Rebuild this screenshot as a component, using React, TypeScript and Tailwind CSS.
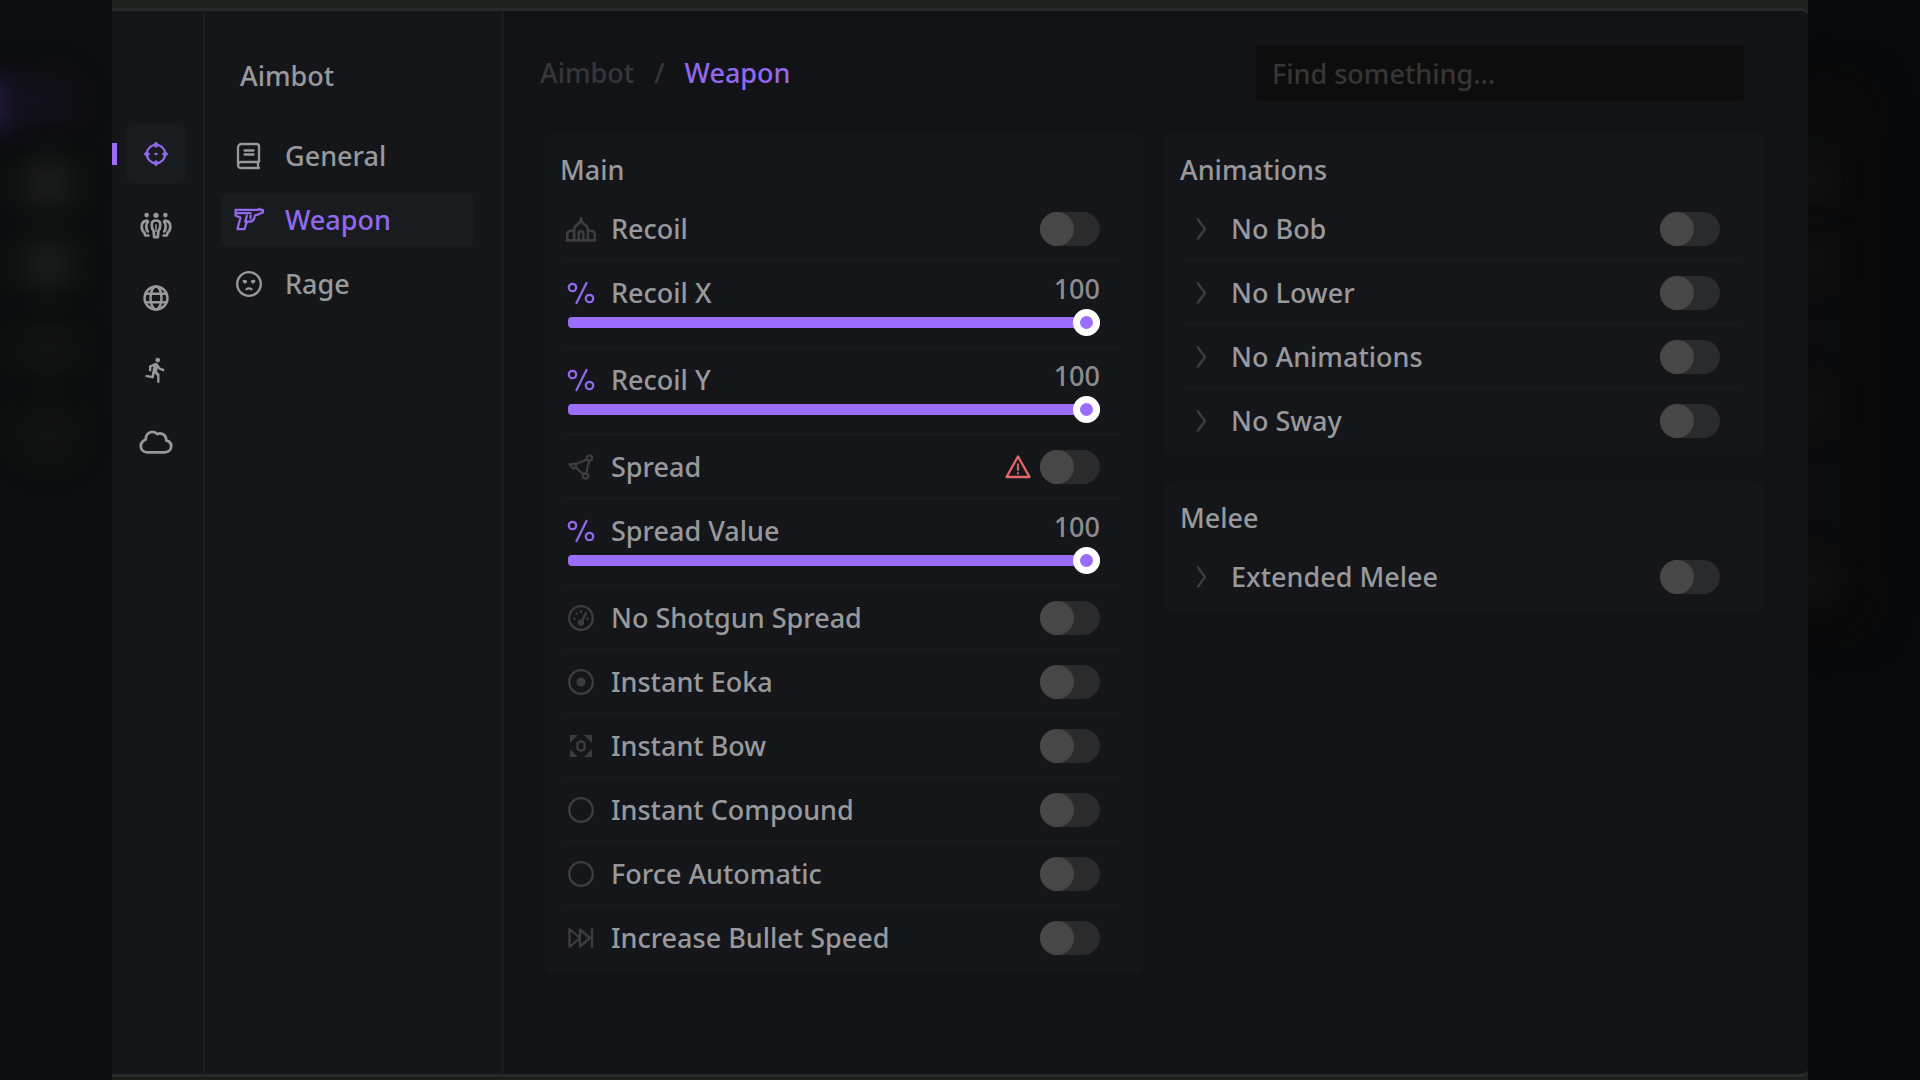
import { useState } from 'react'
import type { ReactNode } from 'react'
import { MdDirectionsRun } from 'react-icons/md'

type IconProps = { size?: number; width?: number; children: ReactNode }

function Icon({ size = 28, width = 2.3, children }: IconProps) {
  return (
    <svg
      width={size}
      height={size}
      viewBox="0 0 28 28"
      fill="none"
      stroke="currentColor"
      strokeWidth={width}
      strokeLinecap="round"
      strokeLinejoin="round"
      className="shrink-0"
      aria-hidden="true"
    >
      {children}
    </svg>
  )
}

const icons = {
  crosshair: (
    <Icon>
      <circle cx="14" cy="14" r="9.2" />
      <path
        d="M14 1.5l3 3.3-3 3.4-3-3.4zM14 26.5l3-3.3-3-3.4-3 3.4zM1.500 14l3.300-3 3.400 3-3.400 3zM26.500 14l-3.300-3-3.400 3 3.400 3z"
        fill="currentColor"
        stroke="none"
      />
      <path d="M13.500 14h1" />
    </Icon>
  ),
  team: (
    <Icon size={34} width={2.2}>
      <g fill="currentColor" stroke="none">
        <circle cx="14" cy="5.200" r="2.200" />
        <circle cx="6.300" cy="5" r="1.900" />
        <circle cx="21.700" cy="5" r="1.900" />
      </g>
      <path d="M14 9.500c2.600 0 3.500 1.400 3.500 3.400 0 2.200-.7 4.200-1.500 5.200l-.5 5h-3l-.5-5c-.8-1-1.500-3-1.500-5.200 0-2 .9-3.400 3.500-3.400z" />
      <path d="M14 13v5.500" strokeWidth="1.2" />
      <path d="M6.800 9.600c-3 .2-4.600 2-4.600 4.800 0 2.600 1 4.200 2.300 5.200l.6 2.200h2.700M7.400 10.500c-1.800 1.600-1.900 6-.2 8" />
      <path d="M21.200 9.600c3 .2 4.600 2 4.600 4.800 0 2.600-1 4.200-2.300 5.200l-.6 2.200h-2.700M20.600 10.500c1.800 1.600 1.900 6 .2 8" />
    </Icon>
  ),
  globe: (
    <Icon width={2.5}>
      <circle cx="14" cy="14" r="11.500" />
      <path d="M4 9.800h20M4 18.200h20" />
      <ellipse cx="14" cy="14" rx="5.500" ry="11.500" />
    </Icon>
  ),
  cloud: (
    <Icon size={34}>
      <path d="M7 22.500h14.200c3.200 0 5.300-2.200 5.300-4.900 0-2.500-1.700-4.300-4-4.700.2-3.300-2.100-6-5.200-6-.8 0-1.500.2-2.200.6-1.100-1.200-2.500-1.800-4-1.800-3.500 0-5.700 2.600-5.600 6.300-2.400 1-4 3-4 5.400 0 3 2.200 5.100 5.500 5.100z" />
    </Icon>
  ),
  book: (
    <Icon>
      <path d="M24 20V4.500A2.500 2.500 0 0 0 21.500 2h-15A3.500 3.500 0 0 0 3 5.500V23M24 20H6a3 3 0 0 0 0 6h18M23 20v6M9.500 8.500h9M9.500 12.500h9" />
    </Icon>
  ),
  pistol: (
    <Icon size={30} width={2.1}>
      <path d="M1.500 4.500h21l1-1 1 1H27v2.300c-2 .5-4.500 2.700-7.500 2.900-.3 3.800-2.300 6-5.500 5.800h-2L9.800 22.500H3.200L6 11.700 1.500 10zM1.500 7.500h14M12 10l-1.500 5.500M15.500 10v2.500" />
    </Icon>
  ),
  face: (
    <Icon>
      <circle cx="14" cy="14" r="11.800" />
      <path d="M8.800 11l2.200.4-1 1.200zM19.200 11l-2.200.4 1 1.200z" fill="currentColor" />
      <path d="M11.500 19.200c1.200-1.200 3.800-1.200 5 0" />
    </Icon>
  ),
  percent: (
    <Icon>
      <circle cx="5.500" cy="8.500" r="3.700" />
      <circle cx="22.500" cy="19.500" r="3.700" />
      <path d="M19.500 4L9.500 24" />
    </Icon>
  ),
  recoil: (
    <Icon size={32}>
      <path d="M1.500 24h25M2 23.500v-5c0-2 1-3 3-3h2M26 23.500v-5c0-2-1-3-3-3h-2M8 23.500V14c0-1.500 1.500-3 3.500-4.500C13 8.500 14 7 14 4.500c0 2.500 1 4 2.500 5C18.500 11 20 12.500 20 14v9.500M12 23.500V18c0-2.500 4-2.500 4 0v5.500" />
    </Icon>
  ),
  spread: (
    <Icon>
      <circle cx="22.500" cy="5" r="2.700" />
      <circle cx="18.500" cy="23" r="2.700" />
      <path d="M20 6.200L9 11.200M22 7.800L19.300 20.200M8.500 14.500l8 7M2.500 11.500l6-.8.8 3.800-3 1.200z" />
    </Icon>
  ),
  gauge: (
    <Icon>
      <circle cx="14" cy="14" r="11.800" />
      <circle cx="14" cy="18.500" r="2" fill="currentColor" />
      <path d="M15 17l4-8M7.500 15v-.5M9.500 9.500l.3.300M14 7.500v.5M20.500 14.500v.5" />
    </Icon>
  ),
  target: (
    <Icon>
      <circle cx="14" cy="14" r="11.800" />
      <circle cx="14" cy="14" r="4.500" fill="currentColor" stroke="none" />
    </Icon>
  ),
  focus: (
    <Icon>
      <path
        d="M3 3h8L3 11zM25 3v8l-8-8zM3 25v-8l8 8zM25 25h-8l8-8z"
        fill="currentColor"
        stroke="none"
      />
      <path d="M14 9l3.500 2v6L14 19l-3.500-2v-6z" />
    </Icon>
  ),
  circle: (
    <Icon>
      <circle cx="14" cy="14" r="11.800" />
    </Icon>
  ),
  forward: (
    <Icon>
      <path d="M2.500 5v18L13 14zM13 5.500v17L23 14zM25 5v18" />
    </Icon>
  ),
  chevron: (
    <Icon>
      <path d="M11 4.500l7 9.500-7 9.500" />
    </Icon>
  ),
  warning: (
    <Icon>
      <path d="M14 3.500L25.500 24h-23z" />
      <path d="M14 11.500v5.500M14 20.200v.3" stroke="#b06a66" />
    </Icon>
  ),
}

type IconName = keyof typeof icons

type Setting = {
  label: string
  icon: IconName
  slider?: boolean
  warning?: boolean
}

const mainSettings: Setting[] = [
  { label: 'Recoil', icon: 'recoil' },
  { label: 'Recoil X', icon: 'percent', slider: true },
  { label: 'Recoil Y', icon: 'percent', slider: true },
  { label: 'Spread', icon: 'spread', warning: true },
  { label: 'Spread Value', icon: 'percent', slider: true },
  { label: 'No Shotgun Spread', icon: 'gauge' },
  { label: 'Instant Eoka', icon: 'target' },
  { label: 'Instant Bow', icon: 'focus' },
  { label: 'Instant Compound', icon: 'circle' },
  { label: 'Force Automatic', icon: 'circle' },
  { label: 'Increase Bullet Speed', icon: 'forward' },
]

const animationSettings: Setting[] = [
  { label: 'No Bob', icon: 'chevron' },
  { label: 'No Lower', icon: 'chevron' },
  { label: 'No Animations', icon: 'chevron' },
  { label: 'No Sway', icon: 'chevron' },
]

const meleeSettings: Setting[] = [{ label: 'Extended Melee', icon: 'chevron' }]

function toId(label: string) {
  return label.toLowerCase().replace(/\s+/g, '-')
}

function ToggleRow({ label, icon, warning }: Setting) {
  return (
    <div className="flex h-16 items-center border-b border-[#1b1d20] pr-5 last:border-transparent">
      <span className="ml-px flex w-8 justify-center text-[#3c3d40]">{icons[icon]}</span>
      <label htmlFor={toId(label)} className="ml-3.5 grow">
        {label}
      </label>
      {warning && <span className="mr-2 text-[#e8666a]">{icons.warning}</span>}
      <input
        id={toId(label)}
        type="checkbox"
        role="switch"
        className="h-[34px] w-[60px] shrink-0 cursor-pointer appearance-none rounded-full bg-[#2a2b2d] before:block before:size-[34px] before:rounded-full before:bg-[#474747] before:content-[''] checked:bg-[#9a6dfb] checked:before:translate-x-[26px]"
      />
    </div>
  )
}

function SliderRow({ label, icon }: Setting) {
  const [value, setValue] = useState(100)

  return (
    <div className="flex h-[87px] flex-col border-b border-[#1b1d20] pr-5 pt-3 last:border-transparent">
      <div className="flex h-10 items-center">
        <span className="ml-px flex w-8 justify-center text-[#9168ee]">{icons[icon]}</span>
        <label htmlFor={toId(label)} className="ml-3.5 grow">
          {label}
        </label>
        <output className="pb-2 text-[#8b8c90]">{value}</output>
      </div>
      <input
        id={toId(label)}
        type="range"
        min={0}
        max={100}
        value={value}
        onChange={(e) => setValue(Number(e.target.value))}
        style={{
          backgroundImage: `linear-gradient(to right, #9a6dfb ${value}%, #2a2b2d ${value}%)`,
        }}
        className="ml-1 mt-1 h-[11px] cursor-pointer appearance-none rounded-sm [&::-webkit-slider-thumb]:size-[27px] [&::-webkit-slider-thumb]:appearance-none [&::-webkit-slider-thumb]:rounded-full [&::-webkit-slider-thumb]:border-[7px] [&::-webkit-slider-thumb]:border-white [&::-webkit-slider-thumb]:bg-[#9a6dfb]"
      />
    </div>
  )
}

function Panel({ title, settings }: { title: string; settings: Setting[] }) {
  return (
    <section className="rounded-lg bg-[#141619] pb-1 pl-5 pr-6 pt-4">
      <h2 className="-ml-1 flex h-12 items-center pb-1.5 font-medium">{title}</h2>
      <div>
        {settings.map((s) =>
          s.slider ? <SliderRow key={s.label} {...s} /> : <ToggleRow key={s.label} {...s} />,
        )}
      </div>
    </section>
  )
}

const railItems: { name: string; icon: ReactNode; active?: boolean }[] = [
  { name: 'Aimbot', icon: icons.crosshair, active: true },
  { name: 'Players', icon: icons.team },
  { name: 'World', icon: icons.globe },
  { name: 'Movement', icon: <MdDirectionsRun size={28} /> },
  { name: 'Cloud', icon: icons.cloud },
]

const menuItems: { name: string; icon: IconName; active?: boolean }[] = [
  { name: 'General', icon: 'book' },
  { name: 'Weapon', icon: 'pistol', active: true },
  { name: 'Rage', icon: 'face' },
]

// Out-of-focus shapes of the page behind the window
function Backdrop() {
  return (
    <div className="absolute inset-0 overflow-hidden" aria-hidden="true">
      <div className="absolute inset-y-0 right-0 w-1/2 bg-[#08090a]" />
      <div className="absolute -left-16 top-20 h-12 w-20 rounded-full bg-[#2a1c4a] blur-lg" />
      <div className="absolute left-4 top-20 h-10 w-14 rounded-full bg-[#161322] blur-lg" />
      <div className="absolute left-6 top-40 size-12 rounded-full bg-[#202122] blur-lg" />
      <div className="absolute left-6 top-60 size-12 rounded-full bg-[#1e2021] blur-lg" />
      <div className="absolute left-6 top-[325px] size-12 rounded-full bg-[#151617] blur-lg" />
      <div className="absolute left-6 top-[410px] size-12 rounded-full bg-[#151617] blur-lg" />
      <div className="absolute right-16 top-24 h-[520px] w-16 bg-[#0b0c0d] blur-xl" />
      <div className="absolute right-[90px] top-40 size-10 rounded-full bg-[#121314] blur-lg" />
      <div className="absolute right-[90px] top-60 size-10 rounded-full bg-[#101112] blur-lg" />
      <div className="absolute right-[90px] top-[385px] size-10 rounded-full bg-[#101112] blur-lg" />
      <div className="absolute right-[90px] top-[560px] size-10 rounded-full bg-[#121314] blur-lg" />
    </div>
  )
}

export default function App() {
  return (
    <div className="relative flex min-h-screen bg-[#0b0d0e] px-28 font-['Noto_Sans','Open_Sans',sans-serif] text-[27px] font-medium leading-9 text-[#98999d]">
      <Backdrop />
      <div className="relative flex grow flex-col bg-[#1c211d] pb-[3px] pt-2">
        <div className="flex grow overflow-hidden rounded-r-lg border-y-[3px] border-[#262a2a] bg-[#111316]">
          <nav className="flex w-[93px] shrink-0 flex-col items-center gap-3 border-r-2 border-[#1a1d1f] bg-[#141619] pr-[3px] pt-[113px]">
            {railItems.map((item) => (
              <button
                key={item.name}
                type="button"
                aria-label={item.name}
                className={
                  item.active
                    ? 'relative flex size-15 items-center justify-center rounded-lg bg-[#181c1e] text-[#9168ee]'
                    : 'flex size-15 items-center justify-center text-[#98999d]'
                }
              >
                {item.active && (
                  <span className="absolute -left-3.5 h-[22px] w-[5px] bg-[#9a6dfb]" />
                )}
                {item.icon}
              </button>
            ))}
          </nav>

          <aside className="w-[299px] shrink-0 border-r-2 border-[#1a1d1f] bg-[#141619] pl-4 pr-7">
            <h1 className="flex h-[118px] items-center pl-[19px] pt-3 font-medium">Aimbot</h1>
            <ul className="flex flex-col gap-2.5">
              {menuItems.map((item) => (
                <li key={item.name}>
                  <a
                    href={`#${toId(item.name)}`}
                    className={
                      item.active
                        ? 'flex h-[54px] items-center rounded-lg bg-[#181c1e] pl-3 text-[#9168ee]'
                        : 'flex h-[54px] items-center pl-3'
                    }
                  >
                    <span className="flex w-8 justify-center">{icons[item.icon]}</span>
                    <span className="ml-5">{item.name}</span>
                  </a>
                </li>
              ))}
            </ul>
          </aside>

          <main className="grow pl-9 pr-11">
            <header className="flex items-center justify-between pr-5 pt-[34px]">
              <p className="flex gap-5 text-[#36373a]">
                <span>Aimbot</span>
                <span>/</span>
                <span className="text-[#9168ee]">Weapon</span>
              </p>
              <input
                type="search"
                aria-label="Search settings"
                placeholder="Find something..."
                className="h-14 w-[488px] rounded bg-[#0d0d0d] px-4 outline-none placeholder:text-[#363636]"
              />
            </header>
            <div className="mt-8 grid grid-cols-2 items-start gap-5 pl-1">
              <Panel title="Main" settings={mainSettings} />
              <div className="flex flex-col gap-6">
                <Panel title="Animations" settings={animationSettings} />
                <Panel title="Melee" settings={meleeSettings} />
              </div>
            </div>
          </main>
        </div>
      </div>
    </div>
  )
}
